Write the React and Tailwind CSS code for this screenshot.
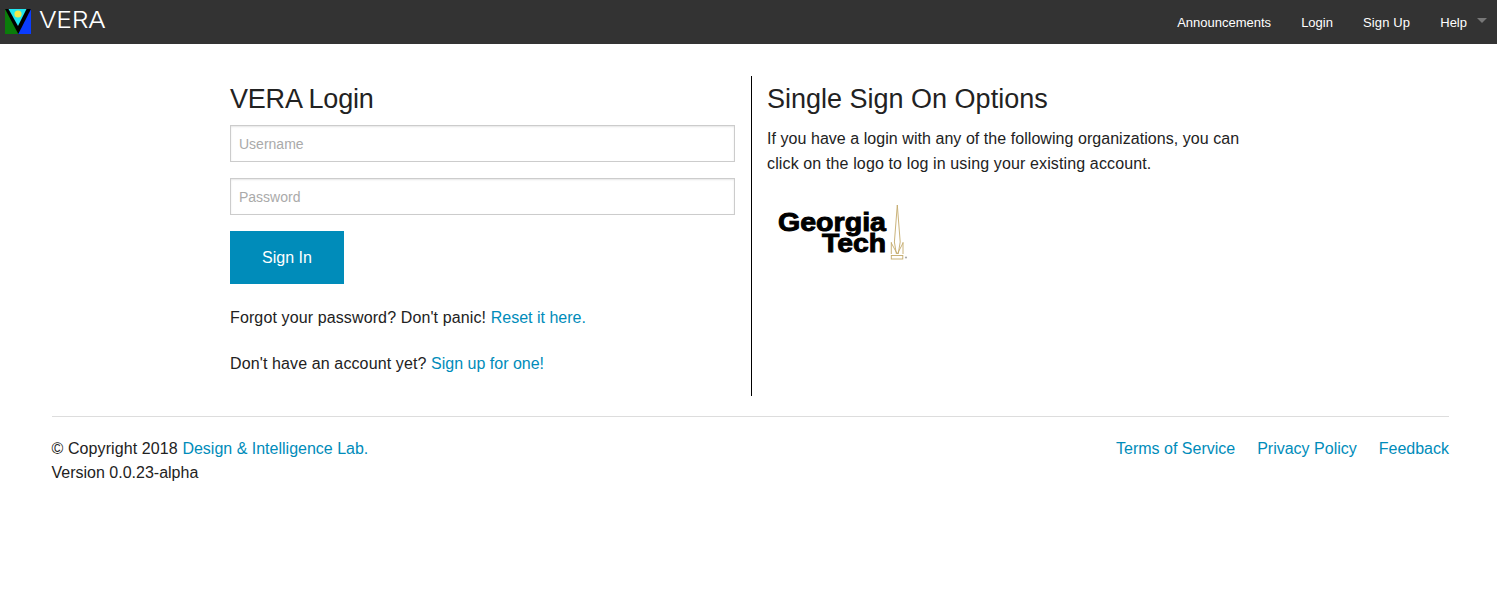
const font = { fontFamily: '"Liberation Sans", Arial, sans-serif' }

function VeraLogo() {
  return (
    <svg width="26" height="25" viewBox="0 0 26 25" className="mt-[-1px] shrink-0">
      <rect x="0" y="0" width="13" height="25" fill="#0a7d0a" />
      <rect x="13" y="0" width="13" height="25" fill="#0a3cff" />
      <polygon points="0,0 26,0 13.3,25" fill="#000" />
      <polygon points="3.5,0 21.5,0 13,17" fill="#22e6f0" />
      <circle cx="13" cy="5" r="3.6" fill="#f2e84a" />
    </svg>
  )
}

function GeorgiaTechLogo() {
  return (
    <svg width="134" height="64" viewBox="0 0 134 64">
      <g fontFamily="Liberation Sans" fontWeight="700" fontSize="25" stroke="#000" strokeWidth="0.9">
        <text x="1" y="31" textLength="108" lengthAdjust="spacingAndGlyphs">
          Georgia
        </text>
        <text x="45" y="51.5" textLength="64" lengthAdjust="spacingAndGlyphs">
          Tech
        </text>
      </g>
      <g fill="none" stroke="#c4aa6c" strokeWidth="0.9">
        <path d="M120.3 5 L117.4 42 L119.4 54 M120.3 5 L123.2 42 L121.2 54" />
        <path d="M114.3 42 L114.3 54 M126 42 L126 54 M114.3 43 L120.3 54 L126 43" />
        <rect x="114.3" y="55.5" width="11.5" height="3.5" />
      </g>
      <circle cx="129" cy="57.5" r="1.1" fill="#aaa" />
    </svg>
  )
}

export default function App() {
  return (
    <div className="min-h-[606px] bg-white text-[16px] leading-[25px] text-[#222]" style={font}>
      <nav className="flex h-[44px] items-center justify-between bg-[#333] pl-[5px] pr-[10px]">
        <div className="flex items-center gap-[8px]">
          <VeraLogo />
          <span className="-mt-[4px] inline-block origin-left scale-x-[1.15] font-['Inter'] text-[23px] leading-none font-light tracking-[-0.4px] text-white">VERA</span>
        </div>
        <div className="flex items-center text-[13px] text-white">
          <a className="mr-[30px]">Announcements</a>
          <a className="mr-[30px]">Login</a>
          <a className="mr-[30px] tracking-[0.15px]">Sign Up</a>
          <a className="mr-[10px]">Help</a>
          <span className="mb-[3px] h-0 w-0 border-x-[5px] border-t-[5px] border-x-transparent border-t-[#777]" />
        </div>
      </nav>

      <main className="mx-auto mt-[32px] flex h-[320px] w-[1037px]">
        <section className="w-[522px] border-r border-black pr-[16px]">
          <h4 className="mt-[7px] text-[27px] leading-[32px] font-normal tracking-[-0.2px]">VERA Login</h4>
          <input
            placeholder="Username"
            className="mt-[10px] block h-[37px] w-full border border-[#ccc] px-[8px] text-[14px] shadow-[inset_0_1px_2px_rgba(0,0,0,0.1)] placeholder:text-[#aaa]"
          />
          <input
            placeholder="Password"
            className="mt-[16px] block h-[37px] w-full border border-[#ccc] px-[8px] text-[14px] shadow-[inset_0_1px_2px_rgba(0,0,0,0.1)] placeholder:text-[#aaa]"
          />
          <button className="mt-[16px] block h-[53px] w-[114px] bg-[#008cba] text-[16px] text-white">Sign In</button>
          <p className="mt-[21px]">
            <span className="tracking-[0.12px]">Forgot your password? Don't panic! </span>
            <a className="text-[#008cba]">Reset it here.</a>
          </p>
          <p className="mt-[21px]">
            <span className="tracking-[0.12px]">Don't have an account yet? </span>
            <a className="text-[#008cba]">Sign up for one!</a>
          </p>
        </section>
        <section className="w-[515px] px-[15px]">
          <h4 className="mt-[7px] text-[27px] leading-[32px] font-normal">Single Sign On Options</h4>
          <p className="mt-[11px] w-[485px]">
            <span className="tracking-[0.05px]">If you have a login with any of the following organizations, you can </span>
            <span className="tracking-[0.13px]">click on the logo to log in using your existing account.</span>
          </p>
          <div className="mt-[24px] ml-[10px]">
            <GeorgiaTechLogo />
          </div>
        </section>
      </main>

      <footer className="mt-[20px] mr-[48px] ml-[52px] flex justify-between border-t border-[#ddd] pt-[20px] leading-[24px]">
        <div className="-ml-[0.5px]">
          <div>
            <span className="tracking-[0.1px]">© Copyright 2018 </span>
            <a className="text-[#008cba]">Design &amp; Intelligence Lab.</a>
          </div>
          <div>Version 0.0.23-alpha</div>
        </div>
        <div className="flex gap-[22px] text-[#008cba]">
          <a>Terms of Service</a>
          <a>Privacy Policy</a>
          <a>Feedback</a>
        </div>
      </footer>
    </div>
  )
}
